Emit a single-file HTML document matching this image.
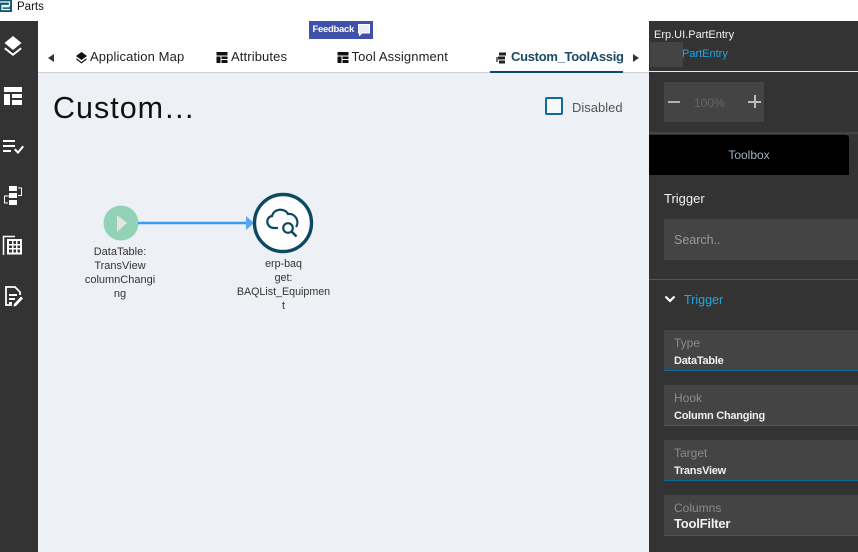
<!DOCTYPE html>
<html><head><meta charset="utf-8">
<style>
html,body{margin:0;padding:0;width:858px;height:552px;overflow:hidden;background:#fff;font-family:"Liberation Sans",sans-serif}
.a{position:absolute;white-space:nowrap}
.b{position:absolute}
.tab{font-size:13px;line-height:16px;color:#222;letter-spacing:.12px}
.fld{position:absolute;left:664px;width:194px;height:40px;background:#444;border-bottom:1px solid #0f6a9c}
.fld .l{position:absolute;left:10px;top:6px;font-size:12px;line-height:14px;color:#8c8c8c}
.fld .v{position:absolute;left:10px;top:24px;font-size:11px;line-height:14px;color:#f0f0f0;font-weight:bold;letter-spacing:-.25px}
.nl{position:absolute;font-size:10.700px;line-height:14px;color:#333;text-align:center}
</style></head><body>
<!-- title bar -->
<svg class="b" style="left:0;top:0" width="13" height="13" viewBox="0 0 13 13"><rect width="12" height="12" fill="#0f5a6e"/><path d="M0 2H9.500V5.500H2V6.800H9.500M2 6.800V9.500H10" fill="none" stroke="#fff" stroke-width="1.200"/></svg>
<div class="a" style="left:17px;top:0;font-size:11.500px;line-height:14px;color:#111">Parts</div>

<!-- sidebar -->
<div class="b" style="left:0;top:21px;width:38px;height:531px;background:#333"></div>
<svg class="b" style="left:0;top:21px" width="38" height="300" viewBox="0 0 38 300" fill="#fff">
<path d="M13 15L21.500 22L13 29L4.500 22Z"/>
<path d="M5.500 26.500L13 32.500L20.500 26.500L21.800 28L13 35L4.200 28Z"/>
<path d="M4 66H22V71H4ZM4 73H10V84H4ZM12 73H22V77H12ZM12 79H22V84H12Z"/>
<path d="M3 119H15V121H3ZM3 124H15V126H3ZM3 129H11V131H3Z"/>
<path d="M14 129L15.500 127.500L18 130L22.500 124.500L24 126L18 133Z"/>
<path d="M9 165H17V170H9ZM9 172H17V177H9ZM9 179H17V184H9Z"/>
<path d="M18 167H21.500V174.500H18M9 175H4.500V182H8" fill="none" stroke="#fff" stroke-width="1"/>
<path d="M3.500 234V215.500H15" fill="none" stroke="#fff" stroke-width="1.500"/>
<path d="M7 218H22V233.500H7Z M9 220V223H12V220Z M13.500 220V223H16V220Z M17.500 220V223H20V220Z M9 224.500V227H12V224.500Z M13.500 224.500V227H16V224.500Z M17.500 224.500V227H20V224.500Z M9 228.500V231.500H12V228.500Z M13.500 228.500V231.500H16V228.500Z M17.500 228.500V231.500H20V228.500Z" fill-rule="evenodd"/>
<path d="M12 284H6V266H15L20 271V274" fill="none" stroke="#fff" stroke-width="1.800"/>
<path d="M9 273H17V275H9ZM9 277H15V279H9ZM9 281H12V283H9Z"/>
<path d="M14 283L21 275.500L23 277.500L16 285L13.500 285.500Z"/>
</svg>

<!-- tab bar -->
<div class="b" style="left:38px;top:72px;width:611px;height:1px;background:#cfd2d6"></div>
<div class="b" style="left:38px;top:73px;width:611px;height:479px;background:#edf0f4"></div>
<div class="b" style="left:48px;top:54px;width:0;height:0;border:4px solid transparent;border-right:6px solid #333;border-left:0"></div>
<div class="b" style="left:633px;top:54px;width:0;height:0;border:4px solid transparent;border-left:6px solid #333;border-right:0"></div>

<svg class="b" style="left:75px;top:51px" width="13" height="13" viewBox="0 0 13 13" fill="#111"><path d="M6.500 1L12 5L6.500 9L1 5Z"/><path d="M2 7.500L6.500 11L11 7.500L12 8.300L6.500 12.500L1 8.300Z"/></svg>
<div class="a tab" style="left:90px;top:49px">Application Map</div>
<svg class="b" style="left:216px;top:52px" width="13" height="12" viewBox="0 0 12 12" fill="#111"><path d="M0 0H11V3.500H0ZM0 4.500H4V11H0ZM5 4.500H11V7H5ZM5 8H11V11H5Z"/></svg>
<div class="a tab" style="left:231px;top:49px">Attributes</div>
<svg class="b" style="left:337px;top:52px" width="13" height="12" viewBox="0 0 12 12" fill="#111"><path d="M0 0H11V3.500H0ZM0 4.500H4V11H0ZM5 4.500H11V7H5ZM5 8H11V11H5Z"/></svg>
<div class="a tab" style="left:351.500px;top:49px">Tool Assignment</div>
<svg class="b" style="left:496px;top:51px" width="12" height="14" viewBox="0 0 12 14" fill="#222"><path d="M3 1.500H10V4.500H3ZM2 5.500H9V8.500H2ZM3 9.500H9V12.500H3Z"/><path d="M0 6H2V11H0Z" fill="#777"/></svg>
<div class="a" style="left:511px;top:49px;width:112px;overflow:hidden;font-size:13px;line-height:16px;font-weight:bold;color:#1d4a66;letter-spacing:-.3px">Custom_ToolAssignment</div>
<div class="b" style="left:490px;top:71px;width:133px;height:1.500px;background:#0f4a66"></div>

<!-- feedback -->
<div class="b" style="left:309px;top:21px;width:64px;height:18px;background:#3f51a8"></div>
<div class="a" style="left:312.500px;top:24px;font-size:9.500px;line-height:12px;color:#fff;font-weight:bold;letter-spacing:-.3px">Feedback</div>
<svg class="b" style="left:358px;top:24px" width="12" height="12" viewBox="0 0 12 12"><path d="M0.500 0.500H11.500V9H4L1.500 11.500V9H0.500Z" fill="#e8ecf8" stroke="#fff" stroke-width="1"/></svg>

<!-- title -->
<div class="a" style="left:53px;top:90px;font-size:30.500px;line-height:36px;color:#111;letter-spacing:1px">Custom<span style="margin-left:1px;letter-spacing:1.500px">...</span></div>
<div class="b" style="left:545px;top:97px;width:14px;height:14px;border:2px solid #0f6a9c;border-radius:2px;background:#f6f8fa"></div>
<div class="a" style="left:572px;top:100px;font-size:13px;line-height:16px;color:#555">Disabled</div>

<!-- flow -->
<svg class="b" style="left:90px;top:185px" width="240" height="80" viewBox="0 0 240 80">
<circle cx="31" cy="38" r="17.500" fill="#92d3b7"/>
<path d="M27 30L37 38L27 47Z" fill="#e6e6d8"/>
<path d="M48 38H157" stroke="#3d9bf0" stroke-width="2.400"/>
<path d="M156 31L164 38L156 45Z" fill="#5aa8f5"/>
<circle cx="193" cy="38" r="28.500" fill="#fff" stroke="#0b4a60" stroke-width="3.400"/>
<path d="M188 43H184C176 43 175 32 182 31C184 23 195 23 198 29C205 28 210 36 206 42" fill="none" stroke="#0b4a60" stroke-width="2.200"/>
<circle cx="198" cy="43" r="4.800" fill="none" stroke="#0b4a60" stroke-width="2.200"/>
<path d="M201.500 46.500L206.500 51.500" stroke="#0b4a60" stroke-width="2.600"/>
</svg>
<div class="nl" style="left:70px;top:245px;width:100px;font-size:11px">DataTable:<br>TransView<br>columnChangi<br>ng</div>
<div class="nl" style="left:233.500px;top:256.500px;width:100px">erp-baq<br>get:<br>BAQList_Equipmen<br>t</div>

<!-- right panel -->
<div class="b" style="left:649px;top:21px;width:209px;height:531px;background:#333"></div>
<div class="a" style="left:654px;top:28px;font-size:11px;line-height:14px;color:#f2f2f2">Erp.UI.PartEntry</div>
<div class="b" style="left:650px;top:42px;width:33px;height:25px;background:#444"></div>
<div class="a" style="left:682px;top:47px;width:60px;font-size:11px;line-height:14px;color:#1fa8e0">PartEntry</div>
<div class="b" style="left:649px;top:71px;width:209px;height:1px;background:#e8e8e8"></div>
<div class="b" style="left:664px;top:82px;width:100px;height:40px;background:#444"></div>
<div class="b" style="left:668px;top:101px;width:12px;height:2px;background:#b0b0b0"></div>
<div class="b" style="left:748px;top:101px;width:13px;height:2px;background:#bbb"></div>
<div class="b" style="left:753.500px;top:95px;width:2px;height:13px;background:#bbb"></div>
<div class="a" style="left:694px;top:96px;font-size:12px;line-height:14px;color:#666">100%</div>
<div class="b" style="left:649px;top:132px;width:209px;height:2px;background:#444"></div>
<div class="b" style="left:649px;top:135px;width:200px;height:40px;background:#000;border-radius:0 3px 0 0"></div>
<div class="a" style="left:649px;top:148px;width:200px;text-align:center;font-size:12px;line-height:15px;color:#9db2c4">Toolbox</div>

<div class="a" style="left:664px;top:191px;font-size:13px;line-height:16px;color:#f2f2f2">Trigger</div>
<div class="b" style="left:664px;top:219px;width:194px;height:40px;background:#444;border-bottom:1px solid #0f5a80"></div>
<div class="a" style="left:674px;top:233px;font-size:12.500px;line-height:15px;color:#999">Search..</div>
<div class="b" style="left:649px;top:279px;width:209px;height:1px;background:#555"></div>
<svg class="b" style="left:664px;top:295px" width="12" height="9" viewBox="0 0 12 9"><path d="M1.500 1.500L6 6L10.500 1.500" fill="none" stroke="#fff" stroke-width="2.200"/></svg>
<div class="a" style="left:684px;top:292px;font-size:12.500px;line-height:16px;color:#1fa8e0">Trigger</div>

<div class="fld" style="top:330px"><div class="l">Type</div><div class="v">DataTable</div></div>
<div class="fld" style="top:385px"><div class="l">Hook</div><div class="v">Column Changing</div></div>
<div class="fld" style="top:440px"><div class="l">Target</div><div class="v">TransView</div></div>
<div class="fld" style="top:495px"><div class="l">Columns</div><div class="v" style="font-size:13px;top:22px;letter-spacing:-.2px">ToolFilter</div></div>
</body></html>
